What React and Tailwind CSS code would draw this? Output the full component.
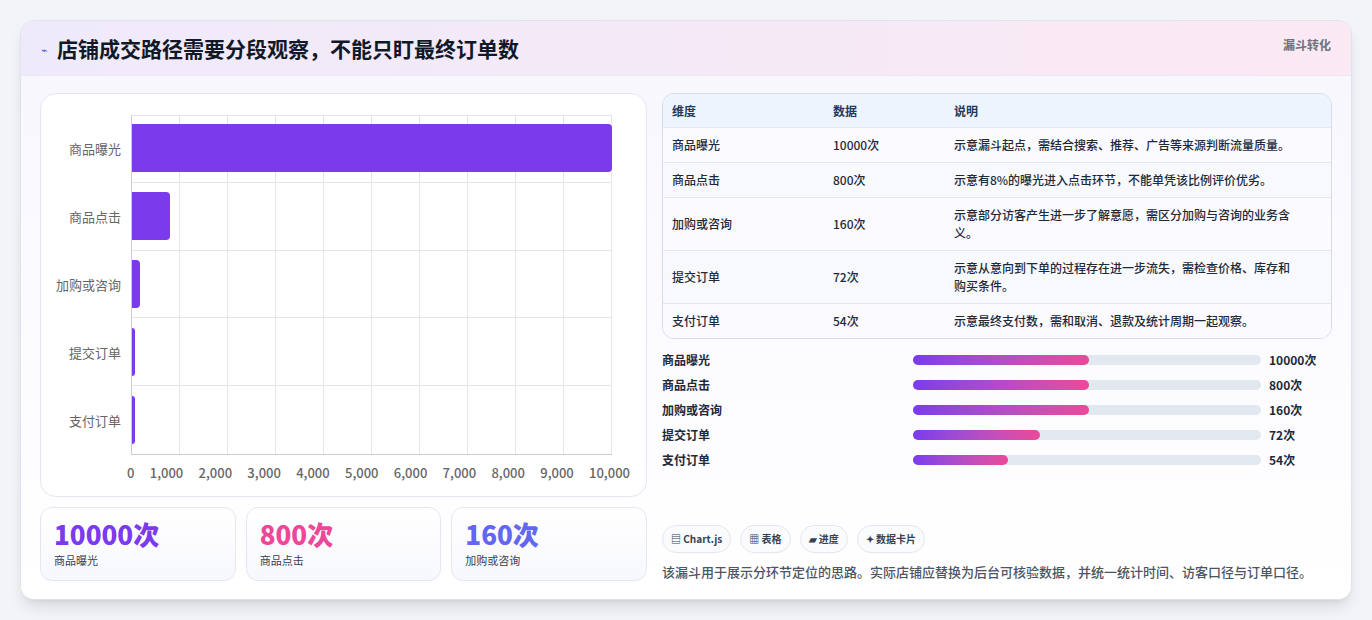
const font = { fontFamily: '"Noto Sans CJK SC", "Noto Sans", sans-serif' };

const rows = [
  ["商品曝光", "10000次", "示意漏斗起点，需结合搜索、推荐、广告等来源判断流量质量。", 10000, 50.6],
  ["商品点击", "800次", "示意有8%的曝光进入点击环节，不能单凭该比例评价优劣。", 800, 50.6],
  ["加购或咨询", "160次", "示意部分访客产生进一步了解意愿，需区分加购与咨询的业务含义。", 160, 50.6],
  ["提交订单", "72次", "示意从意向到下单的过程存在进一步流失，需检查价格、库存和购买条件。", 72, 36.5],
  ["支付订单", "54次", "示意最终支付数，需和取消、退款及统计周期一起观察。", 54, 27.3],
];

function Chart() {
  const ticks = ["0", "1,000", "2,000", "3,000", "4,000", "5,000", "6,000", "7,000", "8,000", "9,000", "10,000"];
  return (
    <div className="h-[404px] rounded-2xl border border-[#e5e7f0] bg-white pl-[12px] pr-[34px] pt-[21px]">
      <div className="flex">
        <div className="flex w-[78px] flex-col">
          {rows.map((r) => (
            <div key={r[0]} className="flex h-[68px] items-center justify-end pr-[10px] text-[13px] text-[#666]">{r[0]}</div>
          ))}
        </div>
        <div className="relative h-[340px] flex-1 border-l border-b border-[#ccc]">
          <div className="absolute inset-0 flex">
            {ticks.slice(1).map((t) => (
              <div key={t} className="flex-1 border-r border-t border-[#e5e5e5]" />
            ))}
          </div>
          <div className="absolute inset-0 flex flex-col">
            {rows.map((r) => (
              <div key={r[0]} className="flex h-[68px] items-center border-b border-[#e5e5e5] last:border-b-0">
                <div className="h-[48px] rounded-r-[4px] bg-[#7c3aed]" style={{ width: `${Math.max(r[3] / 100, 0.4)}%` }} />
              </div>
            ))}
          </div>
        </div>
      </div>
      <div className="ml-[78px] flex justify-between pt-[8px] text-[13px] font-medium text-[#666]">
        {ticks.map((t, i) => (
          <span key={t} className={i === 0 ? "-ml-[4px]" : i === ticks.length - 1 ? "-mr-[18px]" : ""}>{t}</span>
        ))}
      </div>
    </div>
  );
}

export default function App() {
  return (
    <div className="min-h-[620px] bg-[#f3f4f8] p-[20px]" style={font}>
      <div className="overflow-hidden rounded-[14px] border border-[#dfe3f0] bg-white shadow-lg">
        <div className="flex h-[55px] items-start justify-between border-b border-[#ebe7f5] bg-gradient-to-r from-[#efeafb] to-[#fbe9f3] px-[20px]">
          <div className="mt-[12px] flex items-center gap-[9px]">
            <span className="text-[11px] text-[#3b5bdb]">⌁</span>
            <span className="text-[21px] font-bold text-[#111827]">店铺成交路径需要分段观察，不能只盯最终订单数</span>
          </div>
          <span className="mt-[15px] text-[12px] font-semibold text-[#6b7280]">漏斗转化</span>
        </div>
        <div className="flex gap-[15px] bg-gradient-to-b from-[#f8f7fe] to-white px-[19px] pb-[18px] pt-[17px]">
          <div className="w-[607px]">
            <Chart />
            <div className="mt-[10px] grid grid-cols-3 gap-[10px]">
              {[["10000次", "text-[#7c3aed]", "商品曝光"], ["800次", "text-[#ec4899]", "商品点击"], ["160次", "text-[#6366f1]", "加购或咨询"]].map((k) => (
                <div key={k[2]} className="h-[74px] rounded-xl border border-[#e5e7f0] bg-gradient-to-b from-white to-[#f7f8fd] px-[13px] pt-[8px]">
                  <div className={`text-[26px] font-extrabold leading-[36px] ${k[1]}`}>{k[0]}</div>
                  <div className="text-[11px] text-[#374151]">{k[2]}</div>
                </div>
              ))}
            </div>
          </div>
          <div className="flex flex-1 flex-col">
            <div className="overflow-hidden rounded-xl border border-[#d8dcea] text-[12px] text-[#1f2937]">
              <div className="flex h-[33px] items-center bg-[#eef4fe] font-semibold text-[#1e3a5f]">
                <div className="w-[170px] pl-[9px]">维度</div>
                <div className="w-[121px]">数据</div>
                <div className="flex-1">说明</div>
              </div>
              {rows.map((r, i) => (
                <div key={r[0]} className={`flex items-center border-t border-[#e5e7f0] py-[8px] font-medium ${i % 2 ? "bg-[#f7f9fc]" : "bg-[#fbfaff]"}`}>
                  <div className="w-[170px] pl-[9px]">{r[0]}</div>
                  <div className="w-[121px]">{r[1]}</div>
                  <div className="flex-1 pr-[30px] leading-[18px]">{r[2]}</div>
                </div>
              ))}
            </div>
            <div className="mt-[12px] flex flex-col gap-[8px]">
              {rows.map((r) => (
                <div key={r[0]} className="flex h-[17px] items-center text-[12px] font-semibold text-[#1f2937]">
                  <div className="w-[251px]">{r[0]}</div>
                  <div className="h-[10px] w-[348px] rounded-full bg-[#e2e8f0]">
                    <div className="h-full rounded-full bg-gradient-to-r from-[#7c3aed] to-[#ec4899]" style={{ width: `${r[4]}%` }} />
                  </div>
                  <div className="pl-[8px]">{r[1]}</div>
                </div>
              ))}
            </div>
            <div className="mt-auto flex gap-[9px] text-[10px] font-semibold text-[#374151]">
              {["▤ Chart.js", "▦ 表格", "▰ 进度", "✦ 数据卡片"].map((c) => (
                <span key={c} className="flex h-[28px] items-center rounded-full border border-[#e5e7ef] bg-[#fafbfd] px-[8px]">{c}</span>
              ))}
            </div>
            <div className="mt-[9px] text-[13px] font-medium text-[#4b5563]">该漏斗用于展示分环节定位的思路。实际店铺应替换为后台可核验数据，并统一统计时间、访客口径与订单口径。</div>
          </div>
        </div>
      </div>
    </div>
  );
}
